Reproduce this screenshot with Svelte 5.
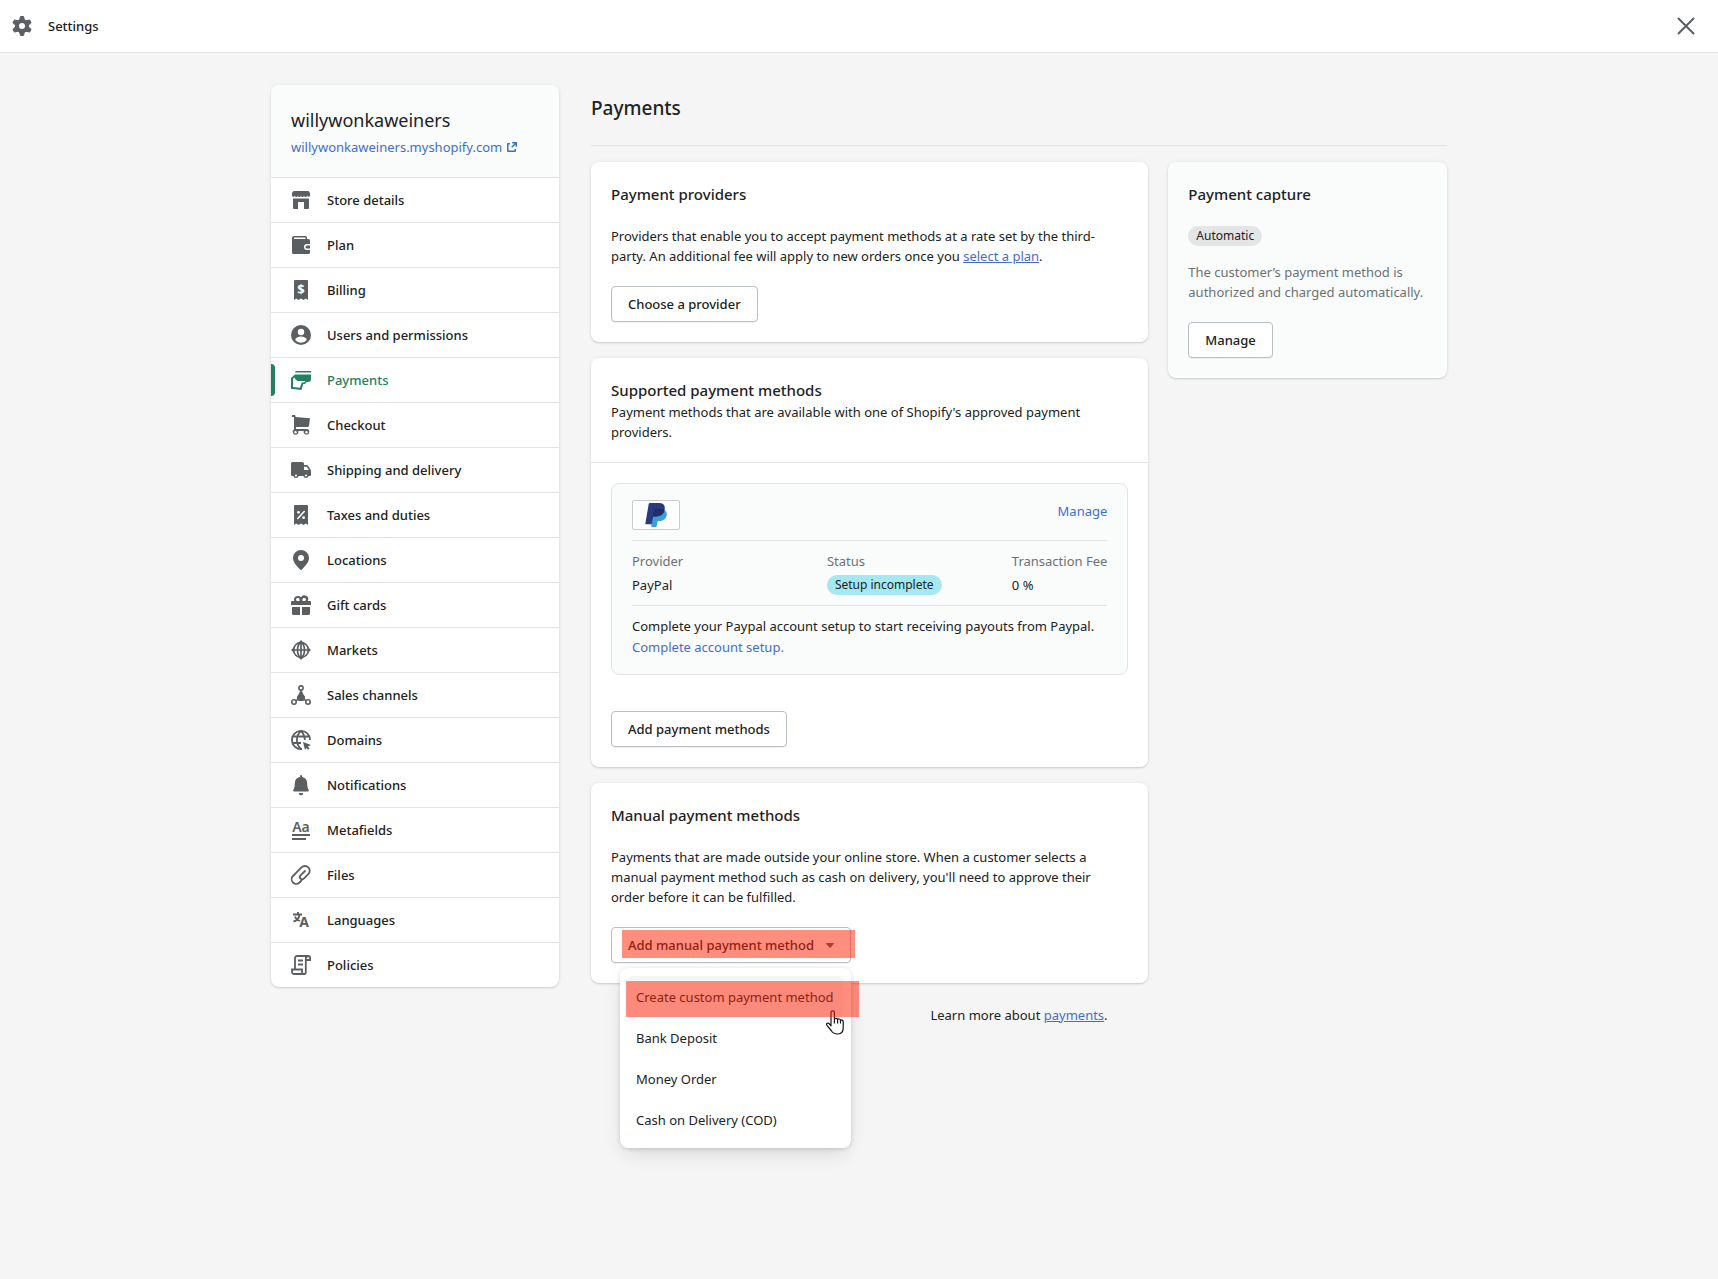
<script lang="ts">
  /**
   * Settings page - payments section with the manual payment menu open.
   */

  interface NavItem {
    label: string;
    icon: string;
  }

  // Icon bodies share a 20x20 view box and inherit their colour
  const receipt = '<path d="M4 0h12a1 1 0 0 1 1 1v19l-2.2-1.5L12.500 20 10 18.500 7.500 20l-2.300-1.500L3 20V1a1 1 0 0 1 1-1z"/>';

  const navItems: NavItem[] = [
    {
      label: 'Store details',
      icon: '<path d="M2.500 1h15L19 3v2.200a1.500 1.500 0 0 1-3 .300 1.500 1.500 0 0 1-3 0 1.500 1.500 0 0 1-3 0 1.500 1.500 0 0 1-3 0 1.500 1.500 0 0 1-3 0 1.500 1.500 0 0 1-3-.300V3z"/><path d="M2 8.500h16V18a1 1 0 0 1-1 1h-4v-7H7v7H3a1 1 0 0 1-1-1z"/>'
    },
    {
      label: 'Plan',
      icon: '<path fill-rule="evenodd" d="M3 1h11.500A1.500 1.500 0 0 1 16 2.500V4h1.500A1.500 1.500 0 0 1 19 5.500V9h-3a3 3 0 0 0 0 6h3v2.500a1.500 1.500 0 0 1-1.500 1.500h-15A1.500 1.500 0 0 1 1 17.500V3a2 2 0 0 1 2-2zm0 1.500v1.500h11.500V2.500z"/><path d="M16 10.500h3v3h-3a1.500 1.500 0 0 1 0-3z"/>'
    },
    {
      label: 'Billing',
      icon: receipt + '<text x="10" y="14" font-size="13" font-weight="700" text-anchor="middle" fill="#fff">$</text>'
    },
    {
      label: 'Users and permissions',
      icon: '<circle cx="10" cy="10" r="10"/><circle cx="10" cy="7" r="3.200" fill="#fff"/><path fill="#fff" d="M4.200 15c1-2.600 3.200-3.500 5.800-3.500s4.800.9 5.800 3.500A7.800 7.800 0 0 1 10 17.800 7.800 7.800 0 0 1 4.200 15z"/>'
    },
    {
      label: 'Payments',
      icon: '<path d="M5 1h15v1.500H4A1.500 1.500 0 0 1 5 1z"/><path fill-rule="evenodd" d="M4 4.500h16V9a3 3 0 0 1-3 3h-1.500L14 14h-1.800L10.500 20 0 18.800V8zM2 8.800v8.200l7 .8 1.600-5.300h2.700l1-1.500H6.500L4 9V7.500z"/>'
    },
    {
      label: 'Checkout',
      icon: '<path d="M1 0h2.500a1 1 0 0 1 1 .800V2L19 3.200 18 11l-1 1H5v2h10.500a2.800 2.800 0 1 1-2.700 2H7.200A2.800 2.800 0 1 1 3 14.600V2H1z"/><circle cx="4.500" cy="17.200" r="1.200" fill="#fff"/><circle cx="15.500" cy="17.200" r="1.200" fill="#fff"/>'
    },
    {
      label: 'Shipping and delivery',
      icon: '<path fill-rule="evenodd" d="M1.500 2h10A1.500 1.500 0 0 1 13 3.500V5h2.500a2 2 0 0 1 1.600.8L19.500 9.500a3 3 0 0 1 .5 1.500v4a1 1 0 0 1-1 1h-1.300a2.800 2.800 0 0 1-5.400 0H7.700a2.800 2.800 0 0 1-5.400 0H1a1 1 0 0 1-1-1V3.500A1.500 1.500 0 0 1 1.500 2zM13 6.800V10h4.800l-2-3.200z"/><circle cx="5" cy="15.500" r="1.100" fill="#fff"/><circle cx="15" cy="15.500" r="1.100" fill="#fff"/>'
    },
    {
      label: 'Taxes and duties',
      icon: receipt + '<path d="M6.800 13.500l6.400-7" stroke="#fff" stroke-width="1.600" stroke-linecap="round"/><circle cx="7.500" cy="7.300" r="1.400" fill="#fff"/><circle cx="12.600" cy="12.700" r="1.400" fill="#fff"/>'
    },
    {
      label: 'Locations',
      icon: '<path fill-rule="evenodd" d="M10 0a8 8 0 0 0-8 7.800c0 4.400 3.400 8 7.300 11.900a1 1 0 0 0 1.400 0C14.600 15.800 18 12.200 18 7.800A8 8 0 0 0 10 0zm0 11a3 3 0 1 1 0-6 3 3 0 0 1 0 6z"/>'
    },
    {
      label: 'Gift cards',
      icon: '<path fill-rule="evenodd" d="M6.500 1A3.500 3.500 0 0 0 3.300 6H1a1 1 0 0 0-1 1v3h20V7a1 1 0 0 0-1-1h-2.300A3.500 3.500 0 0 0 10 2.300 3.500 3.500 0 0 0 6.500 1zm0 2A1.500 1.500 0 0 1 8.500 4.500V6h-2a1.500 1.500 0 0 1 0-3zm7 0a1.500 1.500 0 0 1 0 3h-2V4.500a1.500 1.500 0 0 1 2-1.500z"/><path d="M1 12h8v8H2.500A1.500 1.500 0 0 1 1 18.500zM11 12h8v6.500a1.500 1.500 0 0 1-1.500 1.500H11z"/>'
    },
    {
      label: 'Markets',
      icon: '<g fill="none" stroke="currentColor" stroke-width="1.700"><circle cx="10" cy="10" r="7.400"/><ellipse cx="10" cy="10" rx="3.500" ry="7.200"/><path d="M2 10h16M10 2v16"/></g><path d="M10 0l3 3.200H7zM10 20l3-3.200H7zM0 10l3.200-3v6zM20 10l-3.200-3v6z"/>'
    },
    {
      label: 'Sales channels',
      icon: '<g fill="none" stroke="currentColor" stroke-width="1.600"><circle cx="10" cy="3" r="2.100"/><circle cx="3" cy="17" r="2.200"/><circle cx="17" cy="17" r="2.200"/><path d="M10 5v5M9 13l-4 2.700M11 13l4 2.700"/></g><path d="M8.800 6.500h2.400l1 2.500 2 3-.5 3-1.700 1H8l-1.700-1-.5-3 2-3z"/>'
    },
    {
      label: 'Domains',
      icon: '<g fill="none" stroke="currentColor" stroke-width="1.800"><path d="M19.100 10A9.100 9.100 0 1 0 11 19"/><path d="M10 1C4.500 6 4.500 14 10 19M10 1c2.300 2 3.600 5.300 3.900 9M2 6.500h16M1 13h9"/></g><path d="M12 12l8 3-3.200 1.600 1.700 1.900-1.400 1.300-1.800-1.900L14 20z"/>'
    },
    {
      label: 'Notifications',
      icon: '<path d="M10 0a1 1 0 0 0-1 1v1.100C5.600 2.600 3.800 5 3.800 8.500c0 3-.6 5-1.500 6.500-.4.700 0 1.500.8 1.500h13.800c.8 0 1.200-.8.800-1.500-.9-1.500-1.500-3.500-1.500-6.500C16.200 5 14.400 2.600 11 2.100V1a1 1 0 0 0-1-1zM7.800 18h4.400a2.200 2.200 0 0 1-4.400 0z"/>'
    },
    {
      label: 'Metafields',
      icon: '<text x="10" y="12" font-size="14" font-weight="600" text-anchor="middle">Aa</text><path d="M1 14h18v2H1zM1 18h14v2H1z"/>'
    },
    {
      label: 'Files',
      icon: '<path fill="none" stroke="currentColor" stroke-width="1.800" stroke-linecap="round" d="M10.500 15.500l-2 2a4.600 4.600 0 0 1-6.500 0 4.600 4.600 0 0 1 0-6.500l8.500-8.600a4.800 4.800 0 0 1 6.800 0 4.800 4.800 0 0 1 0 6.800l-4.500 4.500a2.300 2.300 0 0 1-3.300-3.300L14 6"/>'
    },
    {
      label: 'Languages',
      icon: '<g fill="none" stroke="currentColor" stroke-width="1.800"><path d="M2 4.500h9M7 2v2.500M8.500 4.500C8 8 5.500 10.800 2.500 11.500M4 6.500c.8 2.200 3 4 5 4.500"/></g><text x="13" y="17" font-size="14" font-weight="700" text-anchor="middle">A</text>'
    },
    {
      label: 'Policies',
      icon: '<g fill="none" stroke="currentColor" stroke-width="1.800"><path d="M4 14.500V3a2 2 0 0 1 2-2h11.500M3 14.500h8v2.700a1.800 1.800 0 0 0 3.800 0V3.500A2.500 2.500 0 0 1 17.200 1c1.200 0 1.900.9 1.900 2v2h-4M13 19H3a2 2 0 0 1-2-2v-2.500h3"/><path d="M7 5.500h5M7 9.500h5"/></g>'
    }
  ];

  const manualMethods = [
    'Create custom payment method',
    'Bank Deposit',
    'Money Order',
    'Cash on Delivery (COD)'
  ];

  let selected = $state('Payments');
  let menuOpen = $state(true);
</script>

<div class="page">
  <header class="topbar">
    <svg class="icon" viewBox="0 0 20 20" aria-hidden="true">
      <circle cx="10" cy="10" r="5" fill="none" stroke="currentColor" stroke-width="4" />
      {#each [0, 60, 120, 180, 240, 300] as angle}
        <path d="M8.500.5h3l1 4h-5z" transform="rotate({angle} 10 10)" stroke="currentColor" stroke-linejoin="round" />
      {/each}
    </svg>
    <span class="topbar-title">Settings</span>
    <button class="close" aria-label="Close">
      <svg class="icon" viewBox="0 0 20 20" aria-hidden="true">
        <path d="M2.500 2.500l15 15M17.500 2.500l-15 15" stroke="currentColor" stroke-width="2" stroke-linecap="round" />
      </svg>
    </button>
  </header>

  <div class="layout">
    <nav class="sidebar card" aria-label="Settings">
      <div class="shop">
        <div class="shop-name">willywonkaweiners</div>
        <a class="shop-link" href="#shop">
          willywonkaweiners.myshopify.com
          <svg class="icon" viewBox="0 0 20 20" aria-hidden="true">
            <path d="M14 12v2a1 1 0 0 1-1 1H6a1 1 0 0 1-1-1V7a1 1 0 0 1 1-1h2v1.500H6.500v6h6V12zM10.250 5H15v4.750h-1.500V7.560l-3.220 3.220-1.060-1.060 3.220-3.220h-2.190z" />
          </svg>
        </a>
      </div>
      <ul>
        {#each navItems as item}
          <li class:selected={item.label === selected}>
            <a href="#{item.label}" onclick={() => (selected = item.label)}>
              <svg class="icon" viewBox="0 0 20 20" aria-hidden="true">{@html item.icon}</svg>
              {item.label}
            </a>
          </li>
        {/each}
      </ul>
    </nav>

    <main>
      <h1>Payments</h1>

      <div class="columns">
        <div class="primary">
          <section class="card section">
            <h2>Payment providers</h2>
            <p>
              Providers that enable you to accept payment methods at a rate set by the third-party. An
              additional fee will apply to new orders once you <a class="underlined" href="#plan">select a plan</a>.
            </p>
            <button class="button">Choose a provider</button>
          </section>

          <section class="card">
            <div class="section intro">
              <h2>Supported payment methods</h2>
              <p>Payment methods that are available with one of Shopify's approved payment providers.</p>
            </div>
            <div class="section supported">
              <div class="provider">
                <div class="provider-head">
                  <span class="logo">
                    <svg viewBox="0 0 22 24" role="img" aria-label="PayPal">
                      <path fill="#3b9fdc" d="M7 7.500h13.200c1.500 1.200 1.800 3 1.300 5.200-.9 3.700-3.600 5.300-7.300 5.300h-1.500l-1 5.100a1 1 0 0 1-1 .9H6.300z" />
                      <path fill="#283b82" d="M4.800 0H14c4.600 0 6.500 2.400 5.600 6.800-.9 4.500-4 6.700-8.700 6.700H8.200L6.700 21.200H1.200a.8.8 0 0 1-.8-1L3.700 1a1.200 1.200 0 0 1 1.100-1z" />
                      <path fill="#232c65" d="M9.300 6h9.300l1 .8c-.9 4.500-4 6.700-8.700 6.700H8.200l-.3.500L9 6.500z" />
                    </svg>
                  </span>
                  <a href="#manage">Manage</a>
                </div>
                <table>
                  <thead>
                    <tr>
                      <th>Provider</th>
                      <th>Status</th>
                      <th>Transaction Fee</th>
                    </tr>
                  </thead>
                  <tbody>
                    <tr>
                      <td>PayPal</td>
                      <td><span class="badge info">Setup incomplete</span></td>
                      <td>0 %</td>
                    </tr>
                  </tbody>
                </table>
                <div class="setup">
                  <span>Complete your Paypal account setup to start receiving payouts from Paypal.</span>
                  <a href="#setup">Complete account setup.</a>
                </div>
              </div>
              <button class="button">Add payment methods</button>
            </div>
          </section>

          <section class="card section">
            <h2>Manual payment methods</h2>
            <p>
              Payments that are made outside your online store. When a customer selects a manual payment
              method such as cash on delivery, you'll need to approve their order before it can be fulfilled.
            </p>
            <div class="dropdown">
              <button class="button" aria-expanded={menuOpen} onclick={() => (menuOpen = !menuOpen)}>
                Add manual payment method
                <svg class="caret" viewBox="0 0 8 5" aria-hidden="true"><path d="M.5 0h7a.5.5 0 0 1 .4.8L4.400 4.800a.5.5 0 0 1-.8 0L.1.800A.5.5 0 0 1 .5 0z" /></svg>
              </button>
              <span class="highlight on-button"></span>
              {#if menuOpen}
                <div class="menu">
                  {#each manualMethods as method, i}
                    <button class:hovered={i === 0}>{method}</button>
                  {/each}
                  <svg class="pointer" viewBox="0 0 18 25" aria-hidden="true">
                    <path
                      d="M5 15V2.500a1.700 1.700 0 0 1 3.400 0V9c.3-1 3-.9 3.200.5.500-1 2.800-.6 2.900.8.700-.7 2.700-.3 2.700 1.400v6.500c0 3-2 5.600-5.500 5.800-3.500.1-5.200-1.200-6.500-3.500L.9 15.300c-1-1.900 1.100-3 2.400-1.500L5 15.800zM8.400 9v4.500M11.600 9.500v4M14.500 10.500v3"
                      fill="#fff"
                      stroke="#15151f"
                      stroke-width="1.200"
                      stroke-linejoin="round"
                    />
                  </svg>
                  <span class="highlight on-item"></span>
                </div>
              {/if}
            </div>
          </section>
        </div>

        <aside class="card section capture">
          <h2>Payment capture</h2>
          <span class="badge">Automatic</span>
          <p>The customer’s payment method is authorized and charged automatically.</p>
          <button class="button">Manage</button>
        </aside>
      </div>

      <footer>Learn more about <a class="underlined" href="#payments">payments</a>.</footer>
    </main>
  </div>
</div>

<style>
  :global(body) {
    margin: 0;
    background: #f5f5f5;
  }

  .page {
    min-height: 100vh;
    color: #202223;
    font-family: 'Segoe UI', 'Noto Sans', sans-serif;
    font-size: 13px;
    line-height: 20px;
  }

  .page * {
    box-sizing: border-box;
  }

  h1,
  h2,
  p,
  ul {
    margin: 0;
    padding: 0;
  }

  p {
    max-width: 500px;
  }

  a {
    color: #3f6fcb;
    text-decoration: none;
  }

  .underlined {
    text-decoration: underline;
  }

  .icon {
    flex: none;
    width: 20px;
    height: 20px;
    overflow: visible;
    fill: currentColor;
    color: #5c5f62;
  }

  .topbar {
    display: flex;
    align-items: center;
    height: 53px;
    padding: 0 22px 0 12px;
    background: #fff;
    border-bottom: 1px solid #e1e3e5;
  }

  .topbar-title {
    margin-left: 16px;
    font-weight: 500;
  }

  .close {
    display: flex;
    margin-left: auto;
    padding: 0;
    border: none;
    background: none;
    cursor: pointer;
  }

  .layout {
    display: flex;
    align-items: flex-start;
    gap: 32px;
    max-width: 1176px;
    margin: 0 auto;
    padding: 32px 0;
  }

  .card {
    background: #fff;
    border-radius: 8px;
    box-shadow: 0 0 5px rgba(23, 24, 24, 0.05), 0 1px 2px rgba(0, 0, 0, 0.15);
  }

  .sidebar {
    flex: 0 0 288px;
  }

  .shop {
    padding: 20px;
    background: #fafbfb;
    border-radius: 8px 8px 0 0;
  }

  .shop-name {
    margin-bottom: 2px;
    font-size: 18px;
    line-height: 30px;
  }

  .shop-link {
    display: flex;
    align-items: center;
  }

  .shop-link .icon {
    color: inherit;
  }

  .sidebar li {
    position: relative;
    list-style: none;
    border-top: 1px solid #e1e3e5;
  }

  .sidebar li a {
    display: flex;
    align-items: center;
    gap: 16px;
    height: 44px;
    padding: 0 20px;
    color: inherit;
    font-weight: 500;
  }

  .sidebar .selected,
  .selected .icon {
    color: #238060;
  }

  .selected::before {
    content: '';
    position: absolute;
    top: 6px;
    bottom: 6px;
    left: 0;
    width: 4px;
    border-radius: 0 4px 4px 0;
    background: #238060;
  }

  main {
    flex: 1;
    min-width: 0;
  }

  h1 {
    padding: 9px 0 23px;
    border-bottom: 1px solid #e1e3e5;
    font-size: 19px;
    line-height: 28px;
    font-weight: 500;
  }

  h2 {
    font-size: 15px;
    line-height: 24px;
    font-weight: 500;
  }

  .columns {
    display: grid;
    grid-template-columns: 2fr 1fr;
    align-items: start;
    gap: 20px;
    margin-top: 16px;
  }

  .primary {
    display: flex;
    flex-direction: column;
    gap: 16px;
    min-width: 0;
  }

  .section {
    display: flex;
    flex-direction: column;
    align-items: flex-start;
    gap: 20px;
    padding: 20px;
  }

  .intro {
    gap: 0;
    border-bottom: 1px solid #e1e3e5;
  }

  .supported {
    gap: 36px;
  }

  .button {
    height: 36px;
    padding: 0 16px;
    border: 1px solid #babfc3;
    border-radius: 4px;
    background: #fff;
    box-shadow: 0 1px 0 rgba(0, 0, 0, 0.05);
    color: inherit;
    font: inherit;
    font-weight: 500;
    cursor: pointer;
  }

  .provider {
    width: 100%;
    padding: 16px 20px 17px;
    border: 1px solid #e1e3e5;
    border-radius: 8px;
    background: #fafbfb;
  }

  .provider-head {
    display: flex;
    justify-content: space-between;
    margin-bottom: 10px;
    line-height: 22px;
  }

  .logo {
    display: flex;
    align-items: center;
    justify-content: center;
    width: 48px;
    height: 30px;
    border: 1px solid #c9cccf;
    border-radius: 2px;
    background: #fff;
  }

  .logo svg {
    width: 22px;
    height: 24px;
  }

  table {
    width: 100%;
    padding: 10px 0;
    border: solid #e1e3e5;
    border-width: 1px 0;
    border-spacing: 0;
  }

  th,
  td {
    padding: 0;
    text-align: left;
    font-weight: 400;
  }

  th {
    padding-bottom: 4px;
    color: #6d7175;
    white-space: nowrap;
  }

  th:first-child {
    width: 41%;
  }

  th:last-child {
    width: 20%;
  }

  .badge {
    display: block;
    width: fit-content;
    padding: 0 8px;
    border-radius: 10px;
    background: #e4e5e7;
    font-size: 12px;
  }

  .info {
    background: #a4e8f2;
  }

  .setup {
    display: flex;
    flex-direction: column;
    align-items: flex-start;
    gap: 1px;
    margin-top: 10px;
  }

  .dropdown {
    position: relative;
  }

  .dropdown .button {
    display: flex;
    align-items: center;
    gap: 12px;
  }

  .caret {
    width: 8px;
    height: 5px;
    fill: #5c5f62;
  }

  .highlight {
    position: absolute;
    background: rgba(255, 29, 0, 0.5);
    pointer-events: none;
  }

  .on-button {
    inset: 3px -4px 5px 11px;
  }

  .menu {
    position: absolute;
    top: 41px;
    left: 9px;
    right: 0;
    padding: 8px;
    border-radius: 8px;
    background: #fff;
    box-shadow: 0 3px 6px -3px rgba(23, 24, 24, 0.1), 0 8px 20px -4px rgba(23, 24, 24, 0.14), 0 0 4px rgba(0, 0, 0, 0.1);
  }

  .menu button {
    display: block;
    width: 100%;
    padding: 11px 8px 10px;
    border: none;
    border-radius: 4px;
    background: none;
    color: inherit;
    font: inherit;
    line-height: 20px;
    text-align: left;
    white-space: nowrap;
    cursor: pointer;
  }

  .menu .hovered {
    background: #f6f6f7;
  }

  .pointer {
    position: absolute;
    top: 42px;
    right: 7px;
    width: 18px;
    height: 25px;
  }

  .on-item {
    top: 13px;
    left: 6px;
    right: -8px;
    height: 36px;
  }

  .capture {
    background: #fafbfb;
  }

  .capture p {
    margin-top: -4px;
    color: #6d7175;
  }

  footer {
    margin-top: 22px;
    text-align: center;
  }
</style>
